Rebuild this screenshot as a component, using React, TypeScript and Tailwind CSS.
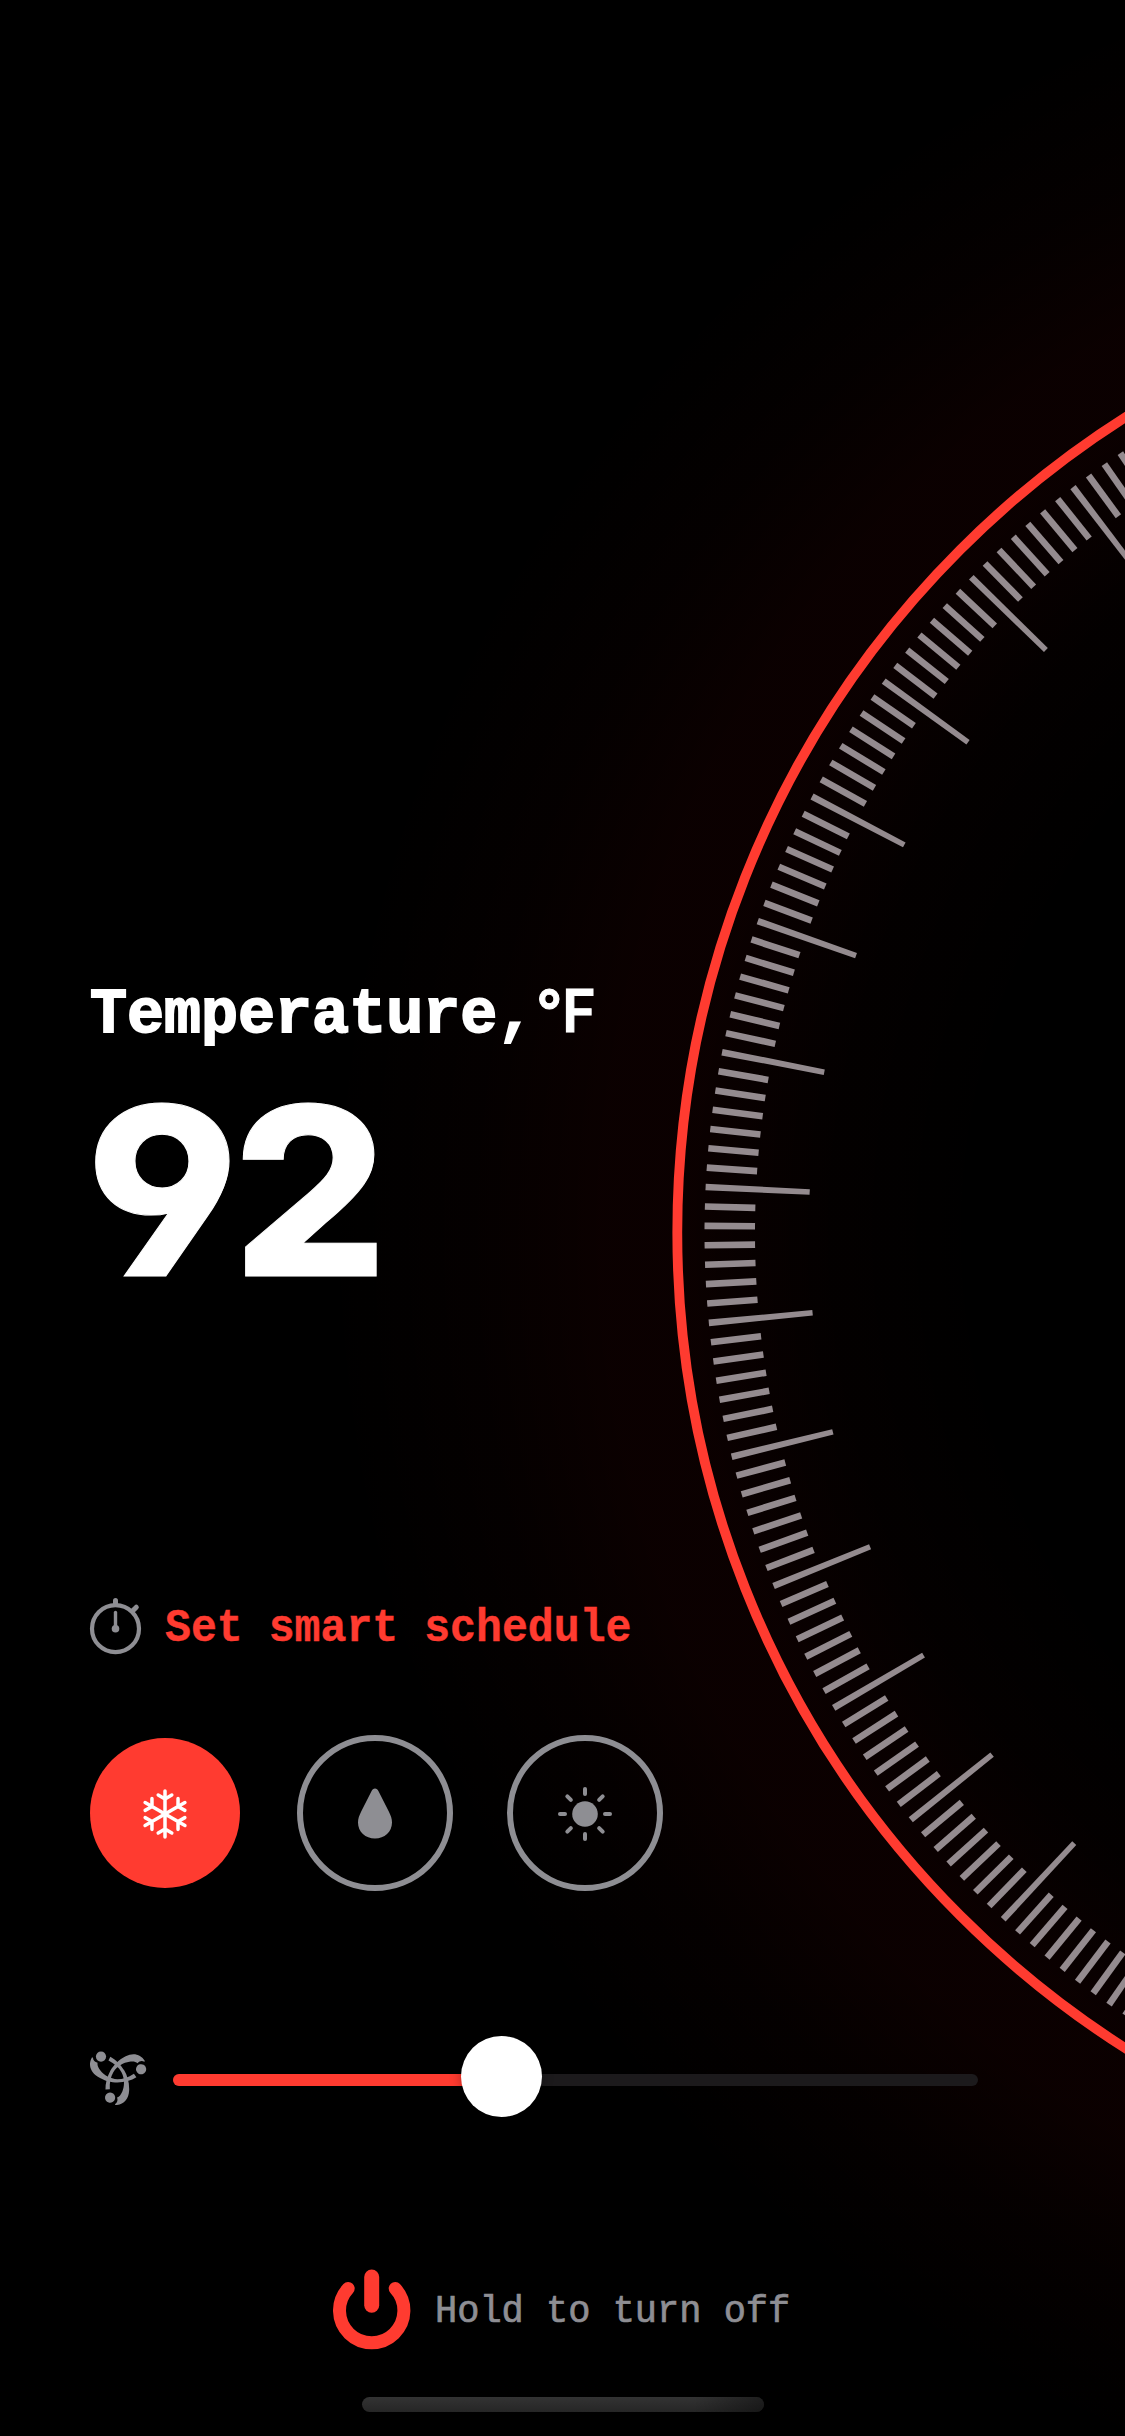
import React from 'react';

const CX = 1643;
const CY = 1232.7;
const STEP = 1.186;

function Dial() {
  const ticks = [];
  for (let i = -60; i <= 60; i++) {
    const angle = 2.79 + i * STEP;
    ticks.push(
      <path
        key={i}
        transform={`translate(${CX} ${CY}) rotate(${angle})`}
        d={i % 7 === 0 ? 'M-938.5 -3.3L-834.3 -2.75V2.75L-938.5 3.3Z' : 'M-938.5 -3.3H-888V3.3H-938.5Z'}
      />
    );
  }
  return (
    <svg className="pointer-events-none absolute inset-0 h-full w-full" viewBox="0 0 1125 2436">
      <defs>
        <radialGradient id="glow" gradientUnits="userSpaceOnUse" cx={CX} cy={CY} r="1320">
          <stop offset="0.5" stopColor="#ff0c08" stopOpacity="0" />
          <stop offset="0.62" stopColor="#ff0c08" stopOpacity="0.014" />
          <stop offset="0.72" stopColor="#ff0c08" stopOpacity="0.042" />
          <stop offset="0.79" stopColor="#ff0c08" stopOpacity="0.042" />
          <stop offset="0.88" stopColor="#ff0c08" stopOpacity="0.018" />
          <stop offset="1" stopColor="#ff0c08" stopOpacity="0" />
        </radialGradient>
      </defs>
      <rect width="1125" height="2436" fill="url(#glow)" />
      <g fill="#948b8f">{ticks}</g>
      <circle cx={CX} cy={CY} r="965.7" fill="none" stroke="#ff3b30" strokeWidth="9.8" />
    </svg>
  );
}

function Timer() {
  return (
    <svg className="h-[60px] w-[54px] shrink-0" viewBox="0 0 54 60" fill="none" stroke="#8e8e93" strokeLinecap="round">
      <circle cx="26.5" cy="32.7" r="23.5" strokeWidth="4.2" />
      <path d="M26.5 4.5V8" strokeWidth="5" />
      <path d="M26.5 16.5V32" strokeWidth="3.4" />
      <path d="M43.5 15L47.3 11.2" strokeWidth="5" />
      <circle cx="26.5" cy="32.7" r="3.8" fill="#8e8e93" stroke="none" />
    </svg>
  );
}

function Snow() {
  return (
    <svg className="size-[56px]" viewBox="-28 -29 56 56" fill="none" stroke="#fff" strokeWidth="3.5" strokeLinecap="round" strokeLinejoin="round">
      {[0, 60, 120, 180, 240, 300].map((r) => (
        <path key={r} transform={`rotate(${r})`} d="M0 0V-23M-6.8 -19L0 -15L6.8 -19" />
      ))}
    </svg>
  );
}

function Drop() {
  return (
    <svg className="size-[56px]" viewBox="-28 -28.5 56 56" fill="#8e8e93">
      <path d="M0 -25C1.6 -25 2.7 -24 3.4 -22.5L13.8 -2C15.8 2.3 17 5 17 9C17 18.3 9.5 25 0 25C-9.5 25 -17 18.3 -17 9C-17 5 -15.8 2.3 -13.8 -2L-3.4 -22.5C-2.7 -24 -1.6 -25 0 -25Z" />
    </svg>
  );
}

function Sun() {
  return (
    <svg className="size-[56px]" viewBox="-28 -29 56 56" stroke="#8e8e93" strokeWidth="4" strokeLinecap="round">
      <circle r="12.8" fill="#8e8e93" stroke="none" />
      {[0, 45, 90, 135, 180, 225, 270, 315].map((r) => (
        <path key={r} transform={`rotate(${r})`} d="M0 -20V-25" />
      ))}
    </svg>
  );
}

function Swirl() {
  return (
    <svg className="h-[56px] w-[58px] shrink-0" viewBox="-28.4 -25.5 58 56" fill="#8e8e93">
      {[0, 120, 240].map((r) => (
        <g key={r} transform={`rotate(${r})`}>
          <circle cx="-16.4" cy="-17.9" r="5.1" />
          <path d="M-25.5 -17C-29.5 -10 -27 -2.5 -20 2C-13 6.5 -6 8 0 8C7 7.8 14 6 19 2.8L16.5 -0.8C11 3 5 4.7 0 4.7C-7 4.4 -13.5 0.5 -17 -4C-19.3 -7 -20.3 -9.5 -19.8 -11.8C-22.6 -12.4 -24.3 -14 -24.5 -17Z" />
        </g>
      ))}
    </svg>
  );
}

function Power() {
  return (
    <svg className="h-[82px] w-[78px] shrink-0" viewBox="0 0 78 82" fill="none" stroke="#ff3b30" strokeLinecap="round">
      <path d="M38.7 9V37.3" strokeWidth="15" />
      <path d="M15.2 20.5A32.2 32.2 0 1 0 62.2 20.5" strokeWidth="13" />
    </svg>
  );
}

export default function App() {
  return (
    <main className="relative flex h-[2436px] w-[1125px] flex-col overflow-hidden bg-black">
      <Dial />
      <section className="relative mt-[975px] flex flex-col pl-[90px] text-white">
        <h1 className="flex h-[72px] origin-left scale-y-[1.03] items-baseline whitespace-pre font-['Liberation_Mono',monospace] text-[61.7px] leading-[72px] font-bold [-webkit-text-stroke:1.8px_#fff]">
          Temperature,<span className="ml-[2px] font-['Inter',sans-serif] text-[57px] font-semibold [-webkit-text-stroke:1px_#fff]">°F</span>
        </h1>
        <p className="mt-[34px] -ml-[4px] h-[219px] origin-left scale-x-[1.035] font-['Inter',sans-serif] text-[235px] leading-[219px] font-extrabold tracking-[-6px] [-webkit-text-stroke:1px_#fff] [font-feature-settings:'cv04']">92</p>
      </section>
      <button className="relative mt-[296px] ml-[89px] flex h-[60px] items-center self-start">
        <Timer />
        <span className="mt-[6px] ml-[22px] origin-left scale-y-[1.05] whitespace-pre font-['Liberation_Mono',monospace] text-[43.2px] leading-[60px] font-bold text-[#ff3b30] [-webkit-text-stroke:0.4px_#ff3b30]">Set smart schedule</span>
      </button>
      <div className="relative mt-[79px] ml-[90px] flex h-[156px] items-center">
        <button className="flex size-[150px] items-center justify-center rounded-full bg-[#ff3b30]"><Snow /></button>
        <button className="ml-[57px] flex size-[156px] items-center justify-center rounded-full border-6 border-[#8e8e93]"><Drop /></button>
        <button className="ml-[54px] flex size-[156px] items-center justify-center rounded-full border-6 border-[#8e8e93]"><Sun /></button>
      </div>
      <div className="relative mt-[145px] ml-[89px] flex h-[82px] items-center">
        <Swirl />
        <div className="relative mt-[5px] ml-[26px] h-[12px] w-[805px] rounded-full bg-[#1c1a1c]">
          <div className="h-full w-[330px] rounded-full bg-[#ff3b30]" />
          <div className="absolute top-[-38px] left-[288px] size-[81px] rounded-full bg-white shadow-[0_0_12px_rgba(0,0,0,0.3)]" />
        </div>
      </div>
      <button className="relative mt-[150px] ml-[333px] flex h-[82px] items-center self-start">
        <Power />
        <span className="mt-[5px] ml-[24px] origin-left scale-y-[1.04] whitespace-pre font-['Liberation_Mono',monospace] text-[37px] leading-[60px] text-[#8e8e93] [-webkit-text-stroke:0.7px_#8e8e93]">Hold to turn off</span>
      </button>
      <div className="relative mt-[47px] ml-[362px] h-[15px] w-[402px] overflow-hidden rounded-full bg-linear-to-b from-[#333] to-[#262626]">
        <div className="ml-auto h-full w-[70px] bg-linear-to-r from-transparent to-black/40" />
      </div>
    </main>
  );
}
